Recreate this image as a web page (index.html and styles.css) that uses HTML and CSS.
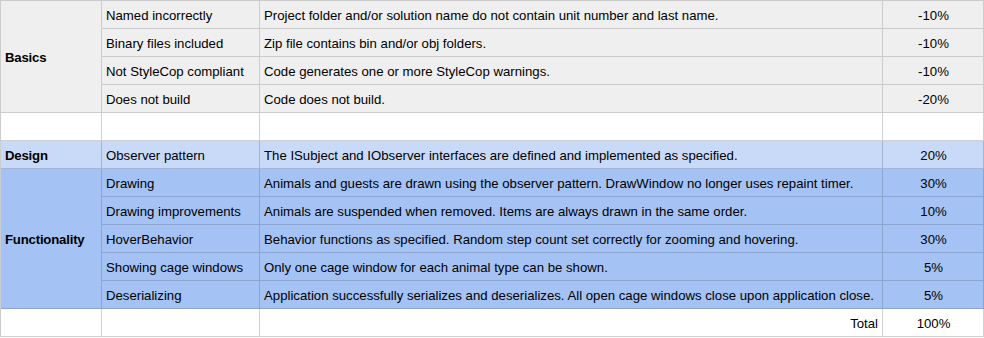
FILE: index.html
```html
<!DOCTYPE html>
<html>
<head>
<meta charset="utf-8">
<link rel="stylesheet" href="styles.css">
</head>
<body>
<div class="sheet">
  <div class="c gray cat span4"><b>Basics</b></div>
  <div class="c gray">Named incorrectly</div>
  <div class="c gray">Project folder and/or solution name do not contain unit number and last name.</div>
  <div class="c gray pct">-10%</div>
  <div class="c gray">Binary files included</div>
  <div class="c gray">Zip file contains bin and/or obj folders.</div>
  <div class="c gray pct">-10%</div>
  <div class="c gray">Not StyleCop compliant</div>
  <div class="c gray">Code generates one or more StyleCop warnings.</div>
  <div class="c gray pct">-10%</div>
  <div class="c gray">Does not build</div>
  <div class="c gray">Code does not build.</div>
  <div class="c gray pct">-20%</div>

  <div class="c white"></div>
  <div class="c white"></div>
  <div class="c white"></div>
  <div class="c white"></div>

  <div class="c light cat"><b>Design</b></div>
  <div class="c light">Observer pattern</div>
  <div class="c light">The ISubject and IObserver interfaces are defined and implemented as specified.</div>
  <div class="c light pct">20%</div>

  <div class="c blue cat span5"><b>Functionality</b></div>
  <div class="c blue">Drawing</div>
  <div class="c blue">Animals and guests are drawn using the observer pattern. DrawWindow no longer uses repaint timer.</div>
  <div class="c blue pct">30%</div>
  <div class="c blue">Drawing improvements</div>
  <div class="c blue">Animals are suspended when removed. Items are always drawn in the same order.</div>
  <div class="c blue pct">10%</div>
  <div class="c blue">HoverBehavior</div>
  <div class="c blue">Behavior functions as specified. Random step count set correctly for zooming and hovering.</div>
  <div class="c blue pct">30%</div>
  <div class="c blue">Showing cage windows</div>
  <div class="c blue">Only one cage window for each animal type can be shown.</div>
  <div class="c blue pct">5%</div>
  <div class="c blue">Deserializing</div>
  <div class="c blue">Application successfully serializes and deserializes. All open cage windows close upon application close.</div>
  <div class="c blue pct">5%</div>

  <div class="c white"></div>
  <div class="c white"></div>
  <div class="c white total">Total</div>
  <div class="c white pct">100%</div>
</div>
</body>
</html>
```

FILE: styles.css
```css
html, body {
  margin: 0;
  padding: 0;
  background: #ffffff;
}

.sheet {
  display: grid;
  grid-template-columns: 101px 158px 623px 101px;
  grid-auto-rows: 28px;
  width: 984px;
  box-sizing: border-box;
  border-left: 1px solid #cccccc;
  border-top: 1px solid #cccccc;
  font-family: "Liberation Sans", Arial, sans-serif;
  font-size: 13.2px;
  color: #000000;
}

.c {
  display: flex;
  align-items: center;
  padding: 2px 3px 0 4px;
  box-sizing: border-box;
  border-right: 1px solid #cccccc;
  border-bottom: 1px solid #cccccc;
  white-space: nowrap;
  overflow: hidden;
}

.cat {
  padding-left: 4px;
}

.cat b {
  font-weight: bold;
  letter-spacing: -0.2px;
}

.span4 {
  grid-row: span 4;
}

.span5 {
  grid-row: span 5;
}

.gray {
  background: #efefef;
  border-color: #cccccc;
}

.white {
  background: #ffffff;
  border-color: #d0d0d0;
}

.light {
  background: #c9daf8;
  border-color: #a3b5d6;
}

.blue {
  background: #a4c2f4;
  border-color: #8ba4d0;
}

.pct {
  justify-content: center;
}

.total {
  justify-content: flex-end;
  padding-right: 4px;
}
```
